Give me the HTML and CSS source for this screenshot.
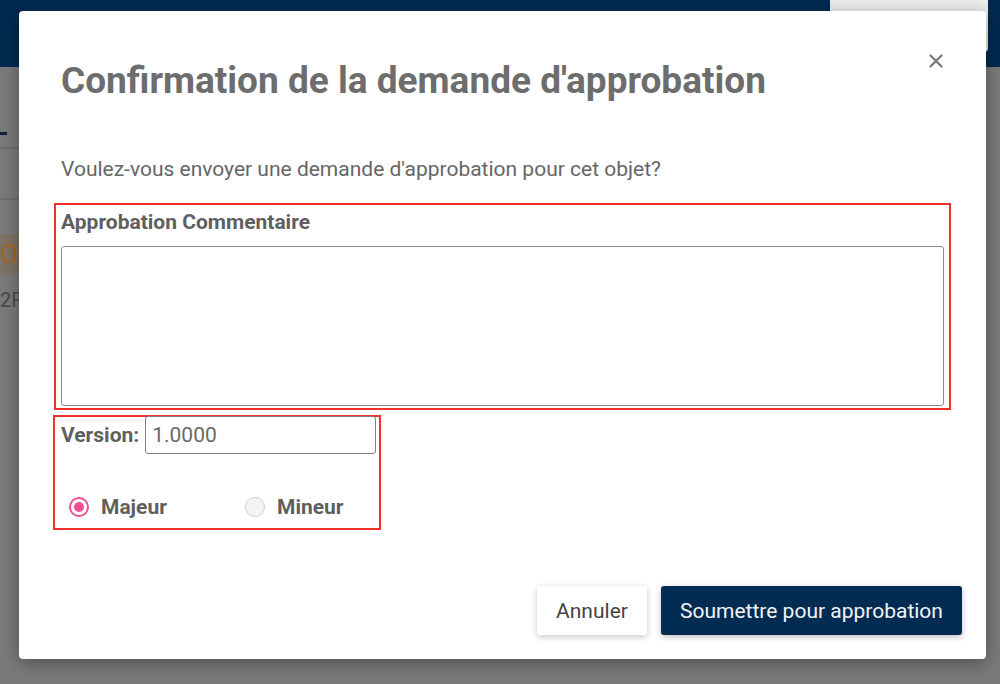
FILE: index.html
```html
<!DOCTYPE html>
<html lang="fr">
<head>
<meta charset="utf-8">
<title>Confirmation</title>
<link rel="stylesheet" href="styles.css">
</head>
<body>
<div class="page">
  <header class="topbar">
    <div class="topbar-card"></div>
  </header>
  <div class="page-body">
    <div class="tab-line"></div>
    <div class="rule rule-a"></div>
    <div class="rule rule-b"></div>
    <div class="status-band"><span class="status-text">O</span></div>
    <div class="code">2F</div>
  </div>
</div>
<div class="modal" role="dialog">
  <button class="close" aria-label="Fermer">
    <svg width="16" height="16" viewBox="0 0 16 16"><path d="M2.5 2.5 L13.5 13.5 M13.5 2.5 L2.5 13.5" stroke="#777" stroke-width="2.2" stroke-linecap="round"/></svg>
  </button>
  <h1 class="title">Confirmation de la demande d'approbation</h1>
  <p class="question">Voulez-vous envoyer une demande d'approbation pour cet objet?</p>
  <div class="box comment-box">
    <label class="field-label">Approbation Commentaire</label>
    <textarea class="comment"></textarea>
  </div>
  <div class="box version-box">
    <div class="version-row">
      <label class="field-label">Version:</label>
      <input class="version-input" type="text" value="1.0000">
    </div>
    <div class="radio-row">
      <label class="radio"><span class="dot checked"></span><span>Majeur</span></label>
      <label class="radio"><span class="dot"></span><span>Mineur</span></label>
    </div>
  </div>
  <div class="actions">
    <button class="btn btn-cancel">Annuler</button>
    <button class="btn btn-primary">Soumettre pour approbation</button>
  </div>
</div>
</body>
</html>
```
FILE: styles.css
```css
* { box-sizing: border-box; }
html, body { margin: 0; padding: 0; }
body {
  width: 1000px;
  height: 684px;
  overflow: hidden;
  font-family: Roboto, "Liberation Sans", sans-serif;
  background: #7b7b7b;
  position: relative;
}
.page { width: 1000px; height: 684px; }
.topbar {
  height: 67px;
  background: #022a50;
  position: relative;
}
.topbar-card {
  position: absolute;
  left: 830px;
  top: 0;
  width: 158px;
  height: 52px;
  background: #ededed;
  border-radius: 0 0 4px 4px;
}
.page-body {
  position: relative;
  height: 617px;
  background: #7a7a7a;
}
.tab-line {
  position: absolute;
  left: 0; top: 65px;
  width: 7px; height: 3px;
  background: #13243a;
}
.rule { position: absolute; left: 0; width: 19px; height: 2px; background: #6f6f6f; }
.rule-a { top: 80px; }
.rule-b { top: 131px; }
.status-band {
  position: absolute;
  left: 0; top: 167px;
  width: 40px; height: 41px;
  background: #7d7366;
}
.status-text {
  display: block;
  color: #a4641f;
  font-size: 26px;
  line-height: 41px;
}
.code {
  position: absolute;
  left: 0; top: 220px;
  color: #4a4a4a;
  font-size: 20px;
  line-height: 26px;
}
.modal {
  position: absolute;
  left: 19px;
  top: 11px;
  width: 967px;
  height: 648px;
  background: #fff;
  border-radius: 4px;
  box-shadow: 0 4px 18px rgba(0,0,0,0.35);
  padding: 0 42px;
  display: flex;
  flex-direction: column;
  z-index: 2;
}
.close {
  position: absolute;
  right: 42px;
  top: 42px;
  width: 16px; height: 16px;
  padding: 0; border: 0; background: none;
  display: flex;
}
.title {
  margin: 48px 0 0 0;
  font-size: 37px;
  line-height: 44px;
  font-weight: 700;
  color: #6d6d6d;
}
.question {
  margin: 52px 0 0 0;
  font-size: 21px;
  line-height: 28px;
  color: #666;
}
.box { border: 2px solid #f2302a; }
.comment-box {
  margin: 20px 0 0 -7px;
  width: 897px;
  height: 207px;
  padding: 4px 4px 0 5px;
  display: flex;
  flex-direction: column;
}
.field-label {
  font-size: 21px;
  font-weight: 700;
  color: #5f5f5f;
  line-height: 26px;
}
.comment {
  margin-top: 11px;
  width: 883px;
  height: 160px;
  border: 1.5px solid #8a8a8a;
  border-radius: 3px;
  resize: none;
  font-family: inherit;
}
.version-box {
  margin: 5px 0 0 -8px;
  width: 328px;
  height: 115px;
  padding: 0 4px 0 6px;
}
.version-row {
  display: flex;
  align-items: center;
  gap: 6px;
  margin-top: -1px;
  height: 38px;
}
.version-input {
  width: 231px;
  height: 38px;
  border: 1.5px solid #808080;
  border-radius: 3px;
  font-family: inherit;
  font-size: 21px;
  color: #6a6a6a;
  padding: 0 6px;
}
.radio-row {
  display: flex;
  margin-top: 41px;
  padding-left: 8px;
}
.radio {
  display: flex;
  align-items: center;
  gap: 12px;
  flex: none;
  font-size: 21px;
  font-weight: 700;
  color: #5f5f5f;
  line-height: 24px;
}
.radio:first-child { width: 176px; }
.dot {
  width: 20px; height: 20px;
  border-radius: 50%;
  border: 1.5px solid #d0d0d0;
  background: #f4f4f4;
  flex: none;
}
.dot.checked {
  border: 2px solid #ef4f95;
  background: #fff;
  position: relative;
}
.dot.checked::after {
  content: "";
  position: absolute;
  left: 3px; top: 3px;
  width: 10px; height: 10px;
  border-radius: 50%;
  background: #ef4f95;
}
.actions {
  margin-top: auto;
  margin-bottom: 24px;
  display: flex;
  justify-content: flex-end;
  gap: 14px;
  margin-right: -18px;
}
.btn {
  height: 49px;
  border: 0;
  border-radius: 3px;
  font-family: inherit;
  font-size: 21px;
  padding: 0;
  cursor: pointer;
}
.btn-cancel {
  width: 110px;
  background: #fff;
  color: #444;
  box-shadow: 0 2px 6px rgba(0,0,0,0.22);
}
.btn-primary {
  width: 301px;
  background: #032c53;
  color: #f2f4f7;
  box-shadow: 0 2px 6px rgba(0,0,0,0.25);
}
```
